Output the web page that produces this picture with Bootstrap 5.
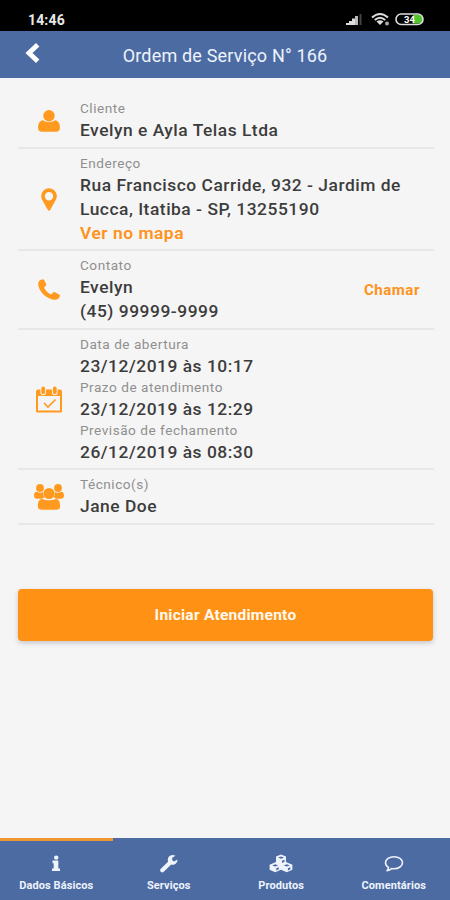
<!DOCTYPE html>
<html lang="pt-BR">
<head>
<meta charset="utf-8">
<meta name="viewport" content="width=device-width, initial-scale=1">
<title>Ordem de Serviço N° 166</title>
<link href="https://cdn.jsdelivr.net/npm/bootstrap@5.3.0/dist/css/bootstrap.min.css" rel="stylesheet">
<style>
body{font-family:Roboto,"Liberation Sans",sans-serif;background:#f5f5f5;color:#3c3c3c;height:900px;overflow:hidden}
.statusbar{height:31px;background:#000;color:#e8e8e8;font-size:14px;font-weight:700;letter-spacing:.15px;padding:10px 25px 0 28px}
.statusbar svg{margin-top:-2px}
.topbar{height:47px;background:#4d6ba3;color:#eef3fc}
.topbar .side{width:64px;padding:0 0 4px 25px}
.topbar h1{font-size:18px;font-weight:400;letter-spacing:.18px;padding-top:2px}
.details{padding:16px 16px 0 18px}
.details .item{background:transparent;border:0;border-bottom:2px solid #e6e8e8;border-radius:0;padding:5px 14px 4.5px 0;color:inherit}
.ico{width:62px;color:#ff9a1e}
.lbl{font-size:13.6px;line-height:19px;color:#8f8f8f;letter-spacing:.52px}
.val{font-size:17.4px;line-height:24px;font-weight:500;letter-spacing:.52px}
.accent{color:#ff921b}
.val .accent{font-weight:600}
.call{font-size:15px;letter-spacing:.55px;line-height:20px}
.start{margin:64px 17px 0 18px;height:52px;border:0;border-radius:4px;font-size:15.5px;font-weight:700;letter-spacing:.25px;padding-top:8px;background:#ff9214!important;color:#fff8ee!important;box-shadow:0 2px 5px rgba(60,50,80,.25)}
.tabs{height:62px;background:#4d6ba3}
.tabs .nav-link{color:#eef3fc;font-size:11px;font-weight:700;line-height:14px;border-top:3px solid transparent;border-radius:0;padding:12px 0 0;letter-spacing:.1px}
.tabs .nav-link.active{border-top-color:#ee9631}
.tabs svg{height:20px;margin-bottom:6px}
</style>
</head>
<body class="d-flex flex-column">
<div class="statusbar d-flex justify-content-between">
  <span>14:46</span>
  <svg width="80" height="18" viewBox="0 0 80 18" class="flex-shrink-0">
    <g fill="#ddd"><path d="M1 15h3v2H1zM4 13h3v4H4zM7 10.500h3v6.500H7z"/><path d="M10 8h3v9h-3z" fill="#bbb"/><path d="M14.500 6h2v11h-2z" fill="#444"/></g>
    <g fill="none" stroke="#ddd" stroke-width="2"><path d="M27 9.500q8-7 16 0M29.800 12q5.200-4.500 10.400 0"/></g><path d="M31.500 13.500q3.500-2.500 7 0L35 17z" fill="#ddd"/><circle cx="42" cy="15.500" r="2" fill="#aaa"/>
    <path d="M68 6.800h5.500a4.300 4.300 0 0 1 0 8.600H68z" fill="#4fc62b"/>
    <rect x="51" y="6" width="27" height="10.500" rx="5.250" fill="none" stroke="#ddd" stroke-width="1.600"/>
    <text x="59" y="14.800" font-family="Roboto" font-size="9.500" font-weight="700" fill="#fff">34</text>
  </svg>
</div>
<header class="topbar d-flex align-items-center">
  <a class="side text-reset lh-1" href="#" aria-label="Voltar"><svg width="15" height="20" viewBox="0 0 15 20"><path d="M12.700 1.800 4 10l8.700 8.200" fill="none" stroke="#fff" stroke-width="4.900"/></svg></a>
  <h1 class="mb-0 flex-fill text-center">Ordem de Serviço N° 166</h1>
  <span class="side"></span>
</header>
<main class="flex-fill">
  <div class="list-group details">
    <div class="list-group-item item d-flex align-items-center">
      <div class="ico text-center flex-shrink-0"><svg width="22" height="22" viewBox="0 0 22 22" fill="currentColor"><circle cx="11" cy="5.800" r="5.700"/><path d="M4.800 10.300Q11 14.200 17.200 10.300C20.700 11 21.900 13.800 21.900 18q0 3.800-3.800 3.800H3.900Q.1 21.800.1 18C.1 13.800 1.300 11 4.800 10.300z"/></svg></div>
      <div><div class="lbl">Cliente</div><div class="val">Evelyn e Ayla Telas Ltda</div></div>
    </div>
    <div class="list-group-item item d-flex align-items-center">
      <div class="ico text-center flex-shrink-0"><svg width="16" height="23" viewBox="0 0 16 23" fill="currentColor"><path fill-rule="evenodd" d="M8 .3a7.800 7.800 0 0 1 7.800 7.800c0 1.500-.3 2.500-.8 3.500L9.300 21.800q-1.300 1.700-2.600 0L1 11.600C.5 10.600.2 9.600.2 8.100A7.800 7.800 0 0 1 8 .3zM8 4a4.200 4.200 0 1 0 0 8.400A4.200 4.200 0 0 0 8 4z"/></svg></div>
      <div><div class="lbl">Endereço</div><div class="val">Rua Francisco Carride, 932 - Jardim de<br>Lucca, Itatiba - SP, 13255190<br><a class="accent text-decoration-none" href="#">Ver no mapa</a></div></div>
    </div>
    <div class="list-group-item item d-flex align-items-center">
      <div class="ico text-center flex-shrink-0"><svg width="22" height="22" viewBox="0 0 22 22" fill="currentColor"><path d="M.2 4.700C.2 2 2.400.5 4.900.3q.9 0 1.400 1L8.300 5.400c.4 1.600-2.200 2-2 3.300.8 2.600 4 5.700 6.600 6.600 1.500.2 2-2.500 3.600-2.200l4.600 2.400q1 .6.800 1.600c-.5 2.600-2.500 3.600-4.700 3.600C9.300 20.700.2 12.500.2 4.700z"/></svg></div>
      <div class="flex-fill"><div class="lbl">Contato</div><div class="val">Evelyn<br>(45) 99999-9999</div></div>
      <a class="accent call fw-bold text-decoration-none" href="#">Chamar</a>
    </div>
    <div class="list-group-item item d-flex align-items-center">
      <div class="ico text-center flex-shrink-0"><svg width="26" height="27" viewBox="0 0 26 27"><path fill="currentColor" fill-rule="evenodd" d="M2 3.500H24q2 0 2 2V25q0 1.500-1.500 1.500h-23Q0 26.500 0 25V5.500Q0 3.500 2 3.500zM2 10V24.500H24V10z"/><path d="M7.200 3v3.500M18.800 3v3.500" stroke="#f5f5f5" stroke-width="5.600" stroke-linecap="round"/><path d="M7.200 2.400v3.800M18.800 2.400v3.800" stroke="currentColor" stroke-width="3.800" stroke-linecap="round"/><path d="M8 17l4 4 7.500-7.500" fill="none" stroke="currentColor" stroke-width="1.600"/></svg></div>
      <div><div class="lbl">Data de abertura</div><div class="val">23/12/2019 às 10:17</div><div class="lbl">Prazo de atendimento</div><div class="val">23/12/2019 às 12:29</div><div class="lbl">Previsão de fechamento</div><div class="val">26/12/2019 às 08:30</div></div>
    </div>
    <div class="list-group-item item d-flex align-items-center">
      <div class="ico text-center flex-shrink-0"><svg width="30" height="26" viewBox="0 0 30 26" fill="currentColor"><circle cx="6" cy="4" r="3.900"/><circle cx="24" cy="4" r="3.900"/><path d="M2.800 7.800q3.200 1.800 6.200.2-.3 3.500 1.500 5.500-1.700.2-2.500 1.200H3Q0 14.500 0 11.800 0 8 2.800 7.800zM27.200 7.800q-3.200 1.800-6.200.2.300 3.500-1.500 5.500 1.700.2 2.500 1.200h5q3-.2 3-2.900 0-3.800-2.800-4z"/><circle cx="15" cy="9.500" r="5.600"/><path d="M8 14.900q7 2.900 14 0c3.500.5 4.100 3.500 4.100 7.400q0 3.500-3.500 3.500H7.400q-3.500 0-3.500-3.500c0-3.900.6-6.900 4.100-7.400z"/></svg></div>
      <div><div class="lbl">Técnico(s)</div><div class="val">Jane Doe</div></div>
    </div>
  </div>
  <div class="d-grid"><button class="btn start" type="button">Iniciar Atendimento</button></div>
</main>
<nav class="nav nav-justified tabs flex-nowrap">
  <a class="nav-link active d-flex flex-column align-items-center w-25" href="#"><svg width="10" viewBox="0 0 10 20" fill="currentColor"><circle cx="5.200" cy="4.600" r="2.200"/><path d="M1.500 7.600h5.800v7.800h1.700V18H1v-2.600h1.700v-5.200H1.500z"/></svg>Dados Básicos</a>
  <a class="nav-link d-flex flex-column align-items-center w-25" href="#"><svg width="20" viewBox="0 0 20 20"><path d="M3.300 17.200 11 9.700" stroke="currentColor" stroke-width="4.200" stroke-linecap="round"/><path fill="currentColor" d="M18.300 6.500c.5 2.500-1.600 5.300-4.600 5.300A5 5 0 0 1 8.700 7a5 5 0 0 1 7.800-4.200L13.200 4.800v2.500l2 1.200z"/></svg>Serviços</a>
  <a class="nav-link d-flex flex-column align-items-center w-25" href="#"><svg width="24" viewBox="0 0 24 20"><path d="M12 1.500l5 2v5.600l6.400 2.600v5l-5.600 2.500L12 16.700l-5.800 2.500L.6 16.700v-5L7 9.100V3.500z" fill="currentColor"/><path d="M9 4.600l3 1.200 3-1.200-3-1.200zM3.200 12.400l3 1.200 3-1.200-3-1.200zM14.800 12.400l3 1.200 3-1.200-3-1.200zM13 7.700v2.200l2.500-1.100V6.700zM7.300 15.300v2.100l2.500-1.100v-2zM18.900 15.300v2.100l2.500-1.100v-2z" fill="#4d6ba3"/></svg>Produtos</a>
  <a class="nav-link d-flex flex-column align-items-center w-25" href="#"><svg width="20" viewBox="0 0 20 20"><path d="M10 3.700c4.700 0 8.500 2.600 8.500 6S14.700 15.700 10 15.700q-1.200 0-2.300-.2-2 1.900-4.700 2.200 1.300-1.300 1.500-3.300-3-1.800-3-4.700c0-3.400 3.800-6 8.500-6z" fill="none" stroke="currentColor" stroke-width="1.600" stroke-linejoin="round"/></svg>Comentários</a>
</nav>
<script src="https://cdn.jsdelivr.net/npm/bootstrap@5.3.0/dist/js/bootstrap.bundle.min.js"></script>
</body>
</html>
